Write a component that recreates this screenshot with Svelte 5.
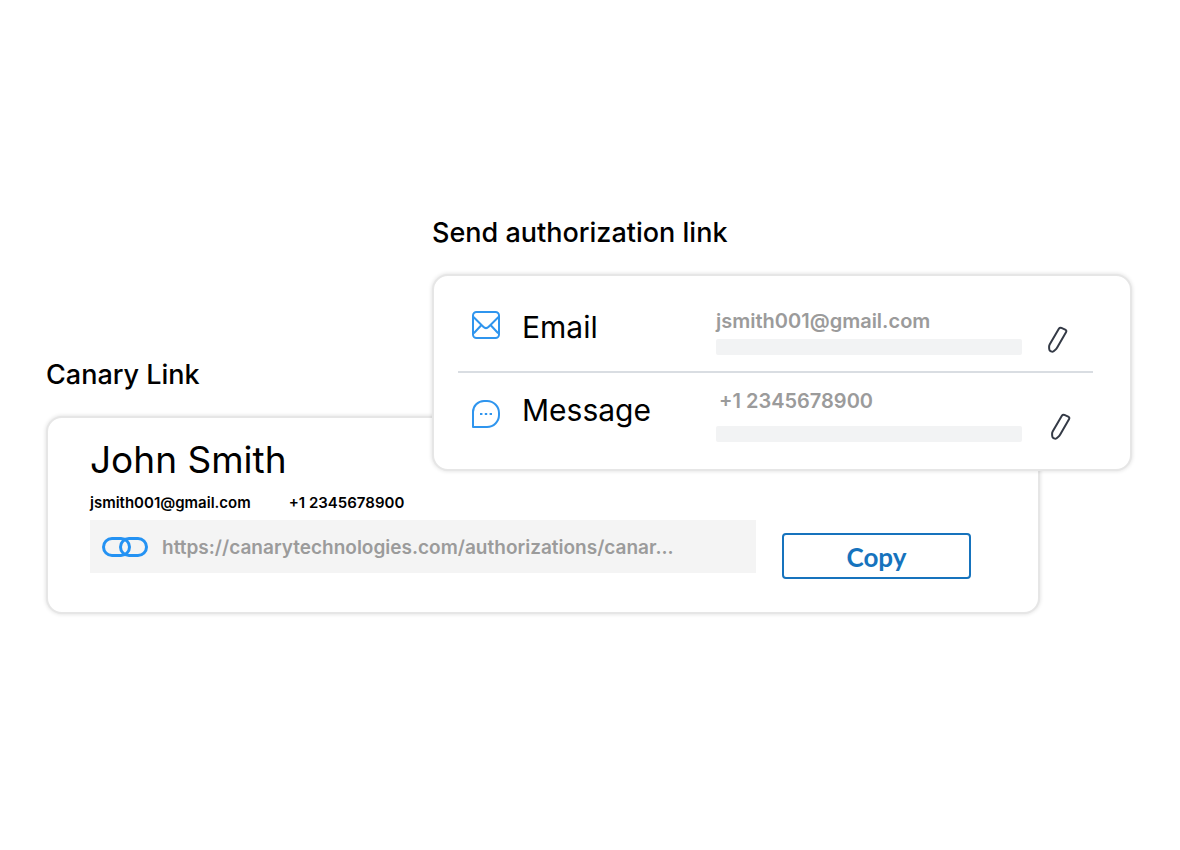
<script lang="ts">
  const guest = {
    name: "John Smith",
    email: "jsmith001@gmail.com",
    phone: "+1 2345678900",
  };
  const link = "https://canarytechnologies.com/authorizations/canar...";

  // One row per channel the link can be sent through.
  const channels: { id: string; label: string; value: string }[] = [
    { id: "email", label: "Email", value: guest.email },
    { id: "message", label: "Message", value: guest.phone },
  ];

  function copyLink() {
    navigator.clipboard?.writeText(link);
  }
</script>

<main>
  <section class="send">
    <h2>Send authorization link</h2>
    <div class="card channels">
      {#each channels as c (c.id)}
        <div class="channel {c.id}">
          <svg class="icon" viewBox="0 0 28 28" aria-hidden="true">
            {#if c.id === "email"}
              <rect x="1" y="1" width="26" height="26" rx="3.5" />
              <path d="M1.5 6 L11.3 15.8 Q14 18.4 16.7 15.8 L26.5 6" />
              <path d="M9.5 14 L1.8 22.2 M18.5 14 L26.2 22.2" />
            {:else}
              <path d="M1 27 V12 A11 11 0 0 1 12 1 H15 A12 12 0 0 1 27 13 V15 A12 12 0 0 1 15 27 Z" />
              <path d="M8 14 h2.4 M12.8 14 h2.4 M17.6 14 h2.4" />
            {/if}
          </svg>
          <h3>{c.label}</h3>
          <div class="value">
            <span>{c.value}</span>
            <div class="bar"></div>
          </div>
          <button class="edit" aria-label="Edit {c.label}">
            <svg viewBox="0 0 20 28" aria-hidden="true">
              <path d="M11 2.6 Q11.9 1.2 13.4 1.9 L17.2 3.6 Q19 4.5 18 6.2 L9.2 21.6 Q8.4 23 7.1 24 L5.6 25.2 Q4.5 26 3.2 25.4 L2.4 25 Q1.3 24.4 1.2 23 L1.1 21 Q1 19.6 1.8 18.2 Z" />
            </svg>
          </button>
        </div>
      {/each}
    </div>
  </section>

  <section class="canary">
    <h2>Canary Link</h2>
    <div class="card guest">
      <h1>{guest.name}</h1>
      <div class="contact">
        <span>{guest.email}</span>
        <span>{guest.phone}</span>
      </div>
      <div class="share">
        <label class="field">
          <svg viewBox="0 0 46 20" aria-hidden="true">
            <rect x="1.5" y="1.5" width="26" height="17" rx="8.5" />
            <rect x="18.5" y="1.5" width="26" height="17" rx="8.5" />
          </svg>
          <input type="text" readonly value={link} aria-label="Canary link" />
        </label>
        <button class="copy" onclick={copyLink}>Copy</button>
      </div>
    </div>
  </section>
</main>

<style>
  :global(body) {
    background: #fff;
  }
  main {
    padding: 215px 48px 48px 47px;
    font-family: Inter, "Liberation Sans", sans-serif;
    color: #000;
  }
  h1,
  h2,
  h3 {
    margin: 0;
    font-weight: 400;
  }
  h2 {
    margin-bottom: 23px;
    font-size: 27px;
    line-height: 36px;
    font-weight: 500;
  }
  .card {
    box-sizing: border-box;
    border: 2px solid #e6e6e6;
    border-radius: 16px;
    background: #fff;
    box-shadow: 0 0 4px rgb(0 0 0 / 14%);
  }

  /* The send card overlaps the top right of the guest card. */
  .send {
    position: relative;
    z-index: 1;
    margin-left: 385px;
  }
  .canary {
    margin: -114px 92px 0 -1px;
  }

  .channels {
    padding: 0 37px 0 24px;
  }
  .channel {
    display: grid;
    grid-template-columns: 28px 172px 1fr 49px;
    column-gap: 22px;
    align-items: start;
    padding: 33px 0 16px 14px;
  }
  .channel + .channel {
    padding: 16px 0 27px 14px;
    border-top: 2px solid #d9dde2;
  }
  .icon {
    width: 28px;
    height: 28px;
    margin-top: 2px;
    fill: none;
    stroke: #2f95ee;
    stroke-width: 2;
    stroke-linejoin: round;
  }
  h3 {
    font-size: 30px;
    line-height: 36px;
  }
  .value {
    color: #9b9b9b;
    font-size: 20px;
    line-height: 24px;
    font-weight: 600;
  }
  .value span {
    display: block;
  }
  .bar {
    height: 16px;
    margin-top: 6px;
    border-radius: 2px;
    background: #f2f3f4;
  }
  .edit {
    display: block;
    width: 20px;
    height: 28px;
    margin: 17px 0 0 4px;
    padding: 0;
    border: 0;
    background: none;
    cursor: pointer;
  }
  .edit svg {
    display: block;
    fill: none;
    stroke: #343a46;
    stroke-width: 2;
    stroke-linejoin: round;
  }
  .message .icon {
    margin-top: 11px;
  }
  .message h3 {
    margin-top: 3px;
  }
  .message span {
    padding-left: 3px;
  }
  .message .bar {
    margin-top: 13px;
  }
  .message .edit {
    margin: 24px 0 0 7px;
  }

  .guest {
    padding: 20px 67px 33px 42px;
  }
  h1 {
    font-size: 37px;
    line-height: 44px;
  }
  .contact {
    display: flex;
    gap: 38px;
    margin: 11px 0 7px;
    font-size: 15px;
    line-height: 20px;
    font-weight: 600;
  }
  .share {
    display: flex;
    align-items: flex-start;
    gap: 26px;
  }
  .field {
    display: flex;
    flex: 1;
    align-items: center;
    gap: 14px;
    min-width: 0;
    height: 53px;
    padding-left: 12px;
    background: #f4f4f4;
  }
  .field svg {
    flex: none;
    width: 46px;
    height: 20px;
    fill: none;
    stroke: #2492f3;
    stroke-width: 3;
  }
  input {
    flex: 1;
    min-width: 0;
    padding: 2px 0 0;
    border: 0;
    outline: 0;
    background: none;
    color: #9b9b9b;
    font: 600 19px/24px Inter, "Liberation Sans", sans-serif;
  }
  .copy {
    width: 189px;
    height: 46px;
    margin-top: 13px;
    padding: 2px 0 0;
    border: 2px solid #1673bd;
    border-radius: 4px;
    background: #fff;
    color: #1673bd;
    font: 700 26px/32px Lato, sans-serif;
    cursor: pointer;
  }
</style>
